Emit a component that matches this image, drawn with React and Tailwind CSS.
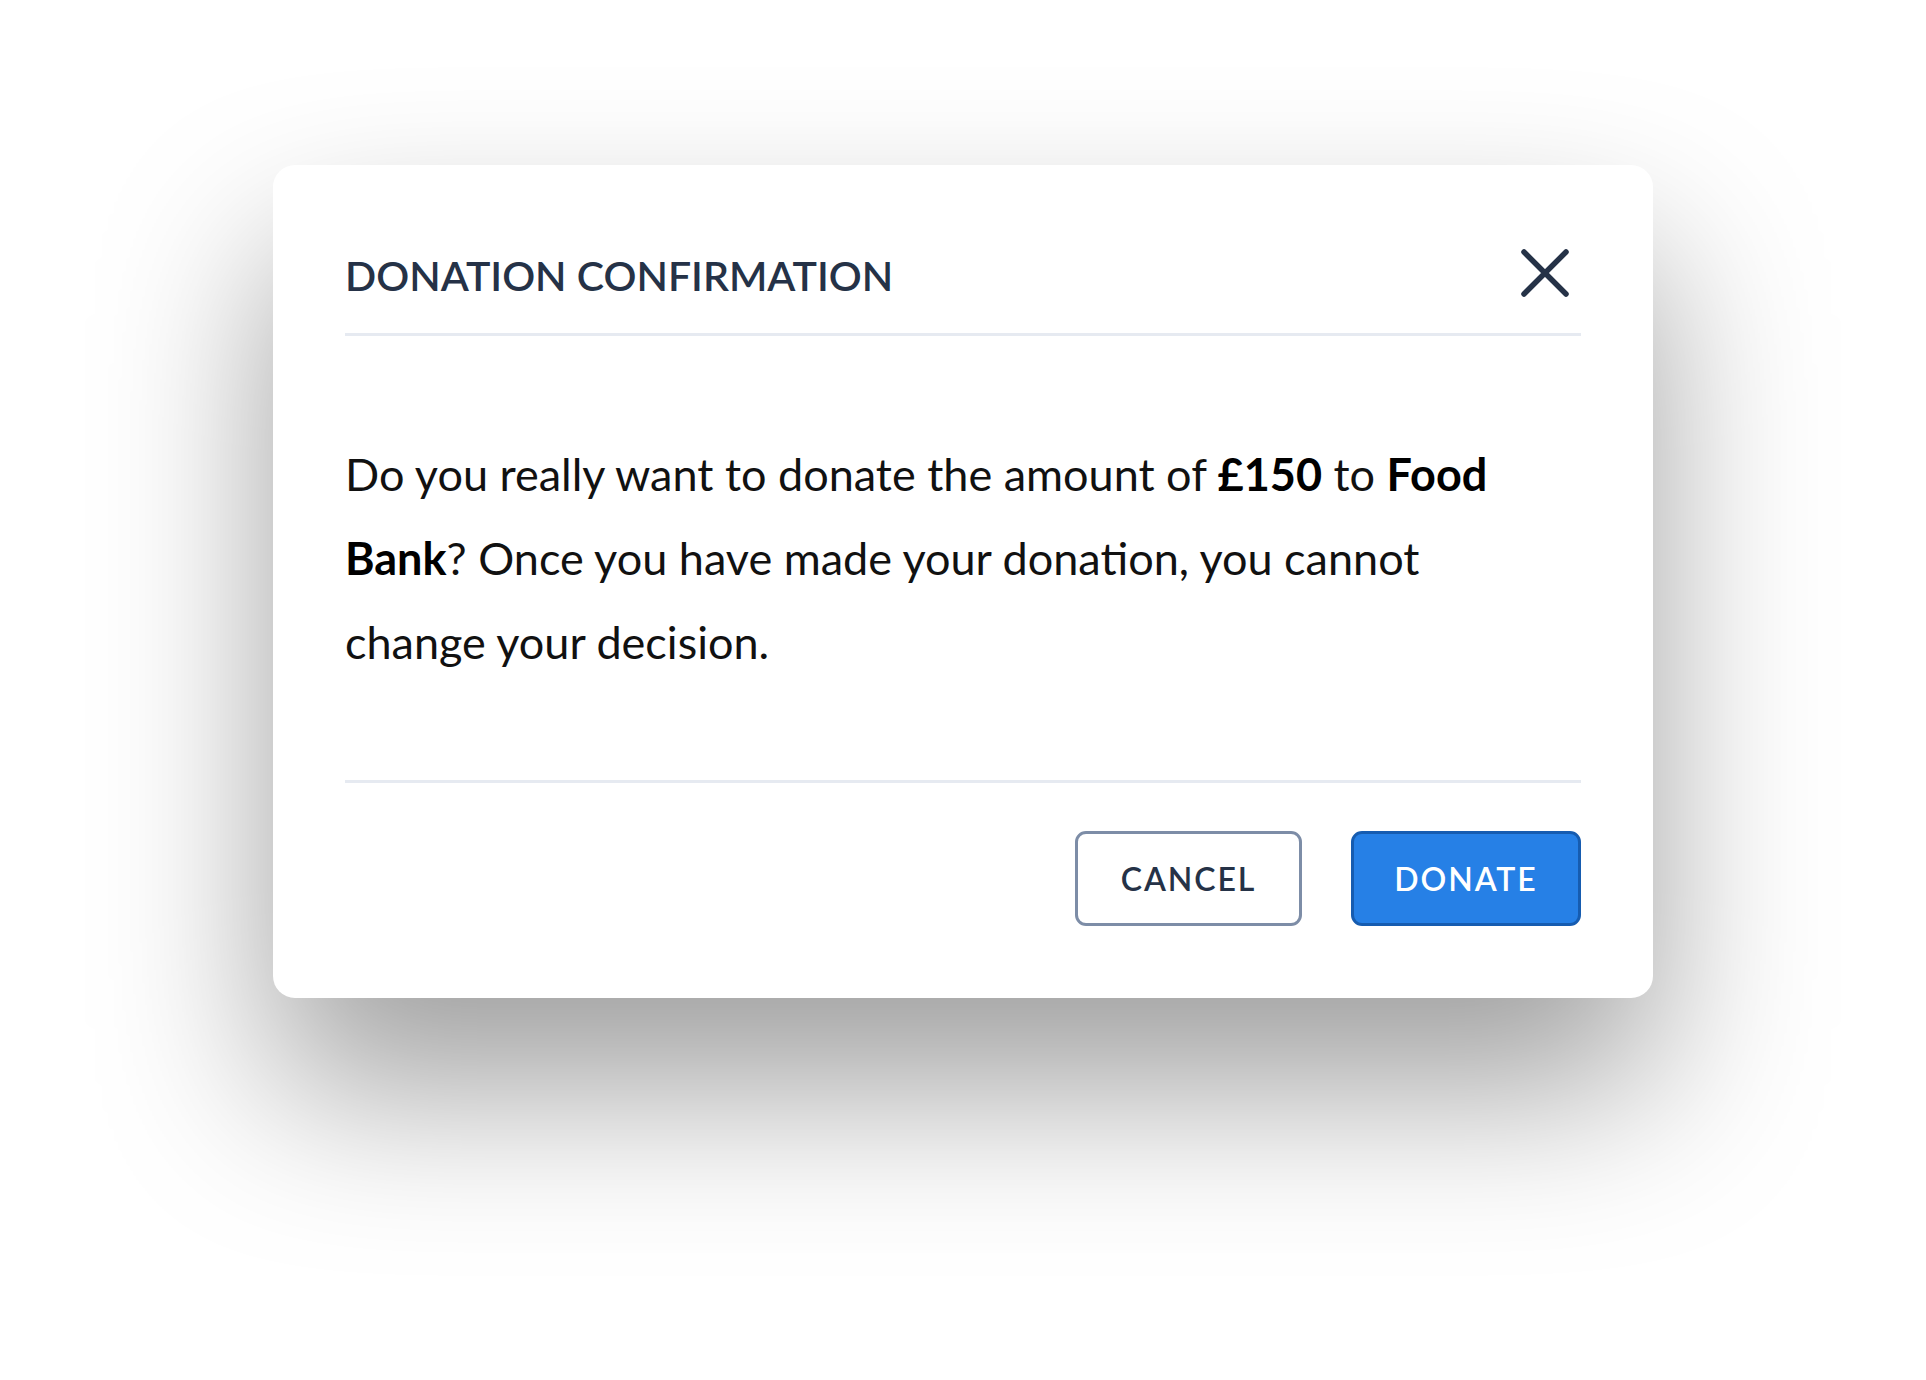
import React from 'react';

const CloseIcon = () => (
  <svg width="48" height="48" viewBox="0 0 48 48" fill="none" aria-hidden="true">
    <path d="M3 3L45 45M45 3L3 45" stroke="#253247" strokeWidth="5.5" strokeLinecap="round" />
  </svg>
);

const DonationModal = () => {
  return (
    <div className="mx-auto mt-[165px] w-[1380px] rounded-[22px] bg-white px-[72px] pt-[72px] pb-[72px] shadow-[0_90px_170px_rgba(0,0,0,0.38)]">
      {/* header */}
      <div className="flex h-[99px] items-center justify-between border-b-[3px] border-[#e6eaf1] pb-[24px]">
        <h2 className="pt-[4px] text-[41px] font-semibold leading-none text-[#253247]">
          DONATION CONFIRMATION
        </h2>
        <button className="mr-[12px] flex h-[48px] w-[48px] items-center justify-center">
          <CloseIcon />
        </button>
      </div>

      {/* body */}
      <div className="py-[96px]">
        <p className="max-w-[1170px] text-[45px] leading-[84px] text-[#111111]">
          Do you really want to donate the amount of <strong className="font-bold text-black">£150</strong> to{' '}
          <strong className="font-bold text-black">Food Bank</strong>? Once you have made your donation, you cannot
          change your decision.
        </p>
      </div>

      {/* footer */}
      <div className="flex justify-end gap-[49px] border-t-[3px] border-[#e6eaf1] pt-[48px]">
        <button className="flex h-[95px] w-[227px] items-center justify-center rounded-[11px] border-[3px] border-[#7d8da7] bg-white text-[32px] font-semibold tracking-[0.06em] text-[#253247]">
          CANCEL
        </button>
        <button className="flex h-[95px] w-[230px] items-center justify-center rounded-[11px] border-[3px] border-[#165cb0] bg-[#2680e6] text-[32px] font-semibold tracking-[0.06em] text-white">
          DONATE
        </button>
      </div>
    </div>
  );
};

export default function App() {
  return (
    <div className="min-h-[1380px] w-full overflow-hidden bg-white font-['Lato','Liberation_Sans',sans-serif]">
      <DonationModal />
    </div>
  );
}
